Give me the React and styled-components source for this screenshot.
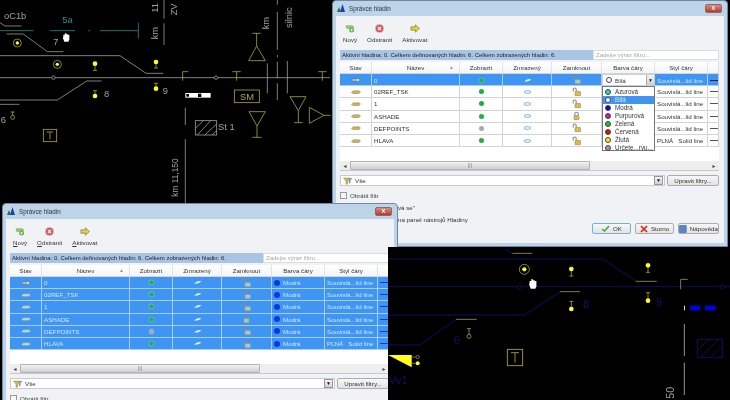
import React from "react";
import styled, { createGlobalStyle } from "styled-components";

const GlobalStyle = createGlobalStyle`
  * {
    margin: 0;
    padding: 0;
    box-sizing: border-box;
  }
  html, body {
    width: 730px;
    height: 400px;
    overflow: hidden;
    background: #000;
    font-family: "Liberation Sans", Arial, sans-serif;
  }
`;

const COLUMNS = "32px 88px 43px 49px 50px 53px 53px 11px";
const SELECTED = "#3f96f2";

const Desktop = styled.div`
  position: relative;
  width: 730px;
  height: 400px;
  overflow: hidden;
  background: #000;
  filter: blur(0.35px);
`;
const CadView = styled.svg`
  position: absolute;
  left: ${(p) => p.$x}px;
  top: ${(p) => p.$y}px;
  width: ${(p) => p.$w}px;
  height: ${(p) => p.$h}px;
  background: #000;
  display: block;
`;
const Window = styled.section`
  position: absolute;
  left: ${(p) => p.$x}px;
  top: ${(p) => p.$y}px;
  width: 396px;
  height: 247px;
  display: flex;
  flex-direction: column;
  background: #bdd3e8;
  border: 1px solid #6b8aa6;
  border-radius: 4px 4px 0 0;
  padding: 0 3px 3px;
  color: #222;
  font-size: 6.2px;
`;
const TitleBar = styled.header`
  height: 15px;
  flex: none;
  display: flex;
  align-items: center;
  gap: 3px;
  padding-left: 1px;
  font-size: 6.3px;
  color: #2b3440;
`;
const CloseButton = styled.div`
  margin-left: auto;
  margin-right: 2px;
  width: 17px;
  height: 9px;
  border-radius: 2px;
  background: linear-gradient(#dc8a80, #b8362a);
  border: 1px solid #8d6a68;
  color: #fff;
  font-size: 7px;
  line-height: 6px;
  text-align: center;
  font-weight: bold;
`;
const Body = styled.div`
  flex: 1;
  display: flex;
  flex-direction: column;
  background: #f0f2f5;
  padding: 0 5px 0 4px;
  min-height: 0;
`;
const Toolbar = styled.div`
  height: 34px;
  flex: none;
  display: flex;
  align-items: flex-start;
  padding: 8px 0 0 3px;
  gap: 10px;
`;
const ToolButton = styled.div`
  display: flex;
  flex-direction: column;
  align-items: center;
  gap: 3px;
  font-size: 6.2px;
  color: #333;
  u {
    text-decoration: ${(p) => (p.$mnemonic ? "underline" : "none")};
  }
`;
const InfoRow = styled.div`
  display: flex;
  height: 10px;
  flex: none;
`;
const InfoText = styled.div`
  width: 253px;
  background: #a9c5e6;
  padding-left: 2px;
  line-height: 10px;
  font-size: 5.95px;
  color: #222;
  white-space: nowrap;
`;
const SearchBox = styled.div`
  flex: 1;
  background: #fff;
  border: 1px solid #d8dde3;
  color: #a8a8a8;
  font-size: 6px;
  line-height: 8px;
  padding-left: 2px;
  white-space: nowrap;
  overflow: hidden;
`;
const TablePanel = styled.div`
  position: relative;
  margin-top: 2px;
  height: 109px;
  flex: none;
  background: #fff;
  border: 1px solid #c4c9cf;
  border-width: 0 0 1px 0;
  display: flex;
  flex-direction: column;
`;
const HeaderRow = styled.div`
  display: grid;
  grid-template-columns: ${COLUMNS};
  height: 12px;
  flex: none;
  background: linear-gradient(#fff, #f3f4f6);
  border-bottom: 1px solid #d5d5d5;
`;
const HeaderCell = styled.div`
  position: relative;
  text-align: center;
  line-height: 11px;
  font-size: 6.2px;
  color: #333;
  border-right: 1px solid #e2e3e6;
`;
const SortMark = styled.span`
  position: absolute;
  right: 5px;
  top: 0;
  font-size: 5px;
  color: #999;
`;
const Row = styled.div`
  display: grid;
  grid-template-columns: ${COLUMNS};
  height: 12.2px;
  flex: none;
  background: ${(p) => (p.$selected ? SELECTED : "#fff")};
  color: ${(p) => (p.$selected ? "#cfe4fb" : "#333")};
  border-bottom: 1px solid ${(p) => (p.$selected ? "#a8cdf5" : "#d4d4d4")};
`;
const Cell = styled.div`
  display: flex;
  align-items: center;
  justify-content: ${(p) => (p.$center ? "center" : "flex-start")};
  padding-left: ${(p) => (p.$center ? 0 : 2)}px;
  gap: 3px;
  font-size: 6.2px;
  white-space: pre;
  overflow: hidden;
  border-right: 1px solid ${(p) => (p.$selected ? "#a8cdf5" : "#d4d4d4")};
`;
const Dash = styled.span`
  display: block;
  width: 100%;
  height: 1px;
  background: ${(p) => p.$color};
`;
const ColorDot = styled.span`
  width: ${(p) => p.$size || 6}px;
  height: ${(p) => p.$size || 6}px;
  flex: none;
  border-radius: 50%;
  background: ${(p) => p.$color};
  border: ${(p) => (p.$ring ? "1px solid #444" : "none")};
`;
const ComboCell = styled.div`
  background: #fff;
  display: flex;
  align-items: center;
  gap: 3px;
  padding-left: 3px;
  color: #333;
  font-size: 6.2px;
  border: 1px solid #c8d0d8;
`;
const ComboArrow = styled.span`
  margin-left: auto;
  width: 8px;
  height: 100%;
  background: linear-gradient(#f4f4f4, #cfcfcf);
  border-left: 1px solid #aaa;
  color: #222;
  font-size: 5px;
  line-height: 10px;
  text-align: center;
`;
const Dropdown = styled.ul`
  position: absolute;
  left: 262px;
  top: 24px;
  width: 53px;
  height: 65px;
  background: #fff;
  border: 1px solid #777;
  list-style: none;
  padding-top: 0.5px;
  font-size: 6.3px;
  z-index: 2;
`;
const DropItem = styled.li`
  display: flex;
  align-items: center;
  gap: 4px;
  height: 8px;
  padding-left: 2px;
  white-space: nowrap;
  overflow: hidden;
  background: ${(p) => (p.$active ? SELECTED : "transparent")};
  color: ${(p) => (p.$active ? "#d8e9fc" : "#333")};
`;
const ScrollBar = styled.div`
  margin-top: auto;
  height: 9px;
  flex: none;
  display: flex;
  align-items: center;
  background: #eeeeee;
  color: #444;
  font-size: 5px;
`;
const ScrollEnd = styled.span`
  width: 10px;
  text-align: center;
  flex: none;
`;
const ScrollTrack = styled.div`
  flex: 1;
  height: 100%;
  display: flex;
`;
const ScrollThumb = styled.div`
  width: 240px;
  height: 100%;
  background: linear-gradient(#f3f3f3, #cfcfcf);
  border: 1px solid #b4b4b4;
  border-radius: 1px;
  text-align: center;
  line-height: 6px;
  color: #777;
`;
const FilterRow = styled.div`
  display: flex;
  align-items: center;
  margin-top: 4px;
  height: 11px;
  flex: none;
  gap: 2px;
`;
const FilterInput = styled.div`
  flex: 1;
  height: 100%;
  display: flex;
  align-items: center;
  gap: 2px;
  padding-left: 2px;
  background: #fff;
  border: 1px solid #c8ccd2;
  font-size: 6.2px;
  color: #333;
  position: relative;
`;
const FilterArrow = styled.span`
  position: absolute;
  right: 1px;
  top: 0;
  bottom: 0;
  width: 9px;
  background: linear-gradient(#f5f5f5, #d0d0d0);
  border: 1px solid #999;
  font-size: 5px;
  line-height: 7px;
  text-align: center;
  color: #111;
`;
const PushButton = styled.div`
  width: ${(p) => p.$w}px;
  height: ${(p) => p.$h || 11}px;
  flex: none;
  display: flex;
  align-items: center;
  justify-content: center;
  gap: 3px;
  background: linear-gradient(#f7f7f7, #e3e3e3);
  border: 1px solid ${(p) => (p.$primary ? "#6fb3d8" : "#adadad")};
  border-radius: 2px;
  font-size: 6.2px;
  color: #333;
  white-space: nowrap;
`;
const CheckRow = styled.label`
  display: flex;
  align-items: center;
  gap: 3px;
  margin-top: 4px;
  height: 10px;
  flex: none;
  font-size: 6.2px;
  color: #444;
`;
const CheckBox = styled.span`
  width: 7px;
  height: 7px;
  background: #f7f7f7;
  border: 1px solid #999;
`;
const Note = styled.div`
  height: 12px;
  line-height: 12px;
  flex: none;
  font-size: 6.2px;
  color: #333;
  white-space: nowrap;
`;
const Notes = styled.div`
  margin-top: 2px;
  padding-left: 58px;
`;
const Footer = styled.div`
  display: flex;
  justify-content: flex-end;
  gap: 4px;
  margin-top: -3px;
`;

const AppLogo = () => (
  <svg width="9" height="9" viewBox="0 0 9 9">
    <path d="M0 8 L2 3 L4 8Z" fill="#1e7a3a" />
    <path d="M3 8 L5.5 0 L8 8Z" fill="#1d3fa8" />
  </svg>
);
const NewIcon = () => (
  <svg width="10" height="9" viewBox="0 0 12 11">
    <path d="M1 2 H9 L11 4 L8 5.5 H2Z" fill="#9cc36a" stroke="#6d9a42" strokeWidth=".5" />
    <circle cx="8" cy="7.5" r="3" fill="#55b04a" />
    <path d="M6.5 7.5 H9.5 M8 6 V9" stroke="#fff" strokeWidth="1" />
  </svg>
);
const DeleteIcon = () => (
  <svg width="9" height="9" viewBox="0 0 11 11">
    <circle cx="5.5" cy="5.5" r="5" fill="#d9575a" stroke="#c9c4c4" />
    <path d="M3.5 3.5 L7.5 7.5 M7.5 3.5 L3.5 7.5" stroke="#fff" strokeWidth="1.4" />
  </svg>
);
const ActivateIcon = () => (
  <svg width="10" height="9" viewBox="0 0 12 11">
    <path d="M1 3.5 H6.5 V1 L11.5 5.5 L6.5 10 V7.5 H1Z" fill="#e4d23e" stroke="#6a6426" strokeWidth=".7" />
  </svg>
);
const LayerIcon = ({ active, selected }) => (
  <svg width="10" height="6" viewBox="0 0 10 6">
    {active ? (
      <path d="M1 2 H6 V.5 L9.5 3 L6 5.5 V4 H1Z" fill={selected ? "#c9d6c0" : "#e4d23e"} stroke="#56646e" strokeWidth=".5" />
    ) : (
      <path d="M.5 3.5 L2.5 1.8 H8 L9.5 2.8 L8 4.5 H2Z" fill={selected ? "#c9d6c0" : "#c9b75c"} stroke={selected ? "#7c94ad" : "#7a6c2a"} strokeWidth=".4" />
    )}
  </svg>
);
const Bulb = ({ off, selected }) => (
  <svg width="7" height="7" viewBox="0 0 7 7">
    <circle cx="3.5" cy="3.5" r="2.5" fill={off ? "#a9a9a9" : "#1fae45"} stroke={selected ? "#8fc2e0" : "none"} strokeWidth=".6" />
  </svg>
);
const Freeze = ({ selected }) =>
  selected ? (
    <svg width="9" height="5" viewBox="0 0 10 5">
      <path d="M1 3.5 Q5 .5 9 1 Q7 4 1 3.5Z" fill="#e6f1fc" />
    </svg>
  ) : (
    <svg width="9" height="6" viewBox="0 0 10 6">
      <ellipse cx="5" cy="3" rx="3.8" ry="1.6" fill="#e6f2fb" stroke="#6fa7d2" strokeWidth=".8" />
    </svg>
  );
const Lock = ({ closed, selected }) => (
  <svg width="9" height="10" viewBox="0 0 9 9">
    {closed ? (
      <path d="M2.8 4 V2.5 a1.7 1.7 0 0 1 3.4 0 V4" fill="none" stroke="#8a8a8a" strokeWidth="1.1" />
    ) : (
      <path d="M1.2 4 V2 a1.5 1.5 0 0 1 3 0 V4" fill="none" stroke="#8a8a8a" strokeWidth="1.1" />
    )}
    <rect x={closed ? 2 : 3} y="4" width={closed ? 5 : 5.5} height="4.2" rx=".5" fill={selected ? "#b8c4b0" : "#d9b95a"} stroke={selected ? "#7f98b2" : "#94782e"} strokeWidth=".5" />
  </svg>
);
const Funnel = () => (
  <svg width="10" height="8" viewBox="0 0 10 8">
    <path d="M.5 1 H7 L4.5 4 V7 L3 7.5 V4Z" fill="#d8b83c" stroke="#8a7428" strokeWidth=".4" />
    <path d="M5 1 H9.5 L7.5 3.5 V6 L6 6.5Z" fill="#8a9ab8" />
  </svg>
);

const Cursor = ({ x, y, s = 3 }) => (
  <path
    transform={`translate(${x} ${y}) scale(${s})`}
    d="M-3 -1 L-3 -3 L-1.5 -3 L-1.5 -4.5 L0 -4.5 L0 -3.5 L1.5 -3.5 L1.5 -3 L3 -3 L3 2 L2 4 L-2 4 L-3.5 0Z"
    fill="#fff"
  />
);
const Signal = ({ x, y, tip, dot = "#ffff1e", hollow, tan = "#a8a83a" }) => (
  <g>
    <path d={`M${x} ${y} V${tip} M${x - 6} ${tip} H${x + 6}`} stroke={tan} strokeWidth="2.4" fill="none" />
    <circle cx={x} cy={y} r={hollow ? 6 : 7} fill={hollow ? "#000" : dot} stroke={hollow ? tan : "none"} strokeWidth="2.4" />
  </g>
);
const Target = ({ x, y, r }) => (
  <g>
    <circle cx={x} cy={y} r={r} fill="none" stroke="#a8a83a" strokeWidth="2.4" />
    <circle cx={x} cy={y} r={r * 0.42} fill="#ffff1e" />
  </g>
);

const TopCad = () => {
  const gray = "#a0a0a0";
  const tan = "#a8a83a";
  return (
    <CadView $x={0} $y={0} $w={335} $h={205} viewBox="0 0 1005 615">
      <g fill="none" strokeWidth="2.4">
        <path d="M0 233 H990" stroke={gray} />
        <path d="M0 167 H360 L438 220 H490" stroke={gray} />
        <path d="M0 300 H172 L260 243 H305" stroke={gray} />
        <path d="M20 102 H70 L142 155 H190" stroke="#a09f70" />
        <path d="M0 68 L15 78 H65" stroke="#a09f70" />
        <path d="M0 313 H58" stroke="#a09f70" />
        <path d="M0 92 H100 M150 92 H225 M265 92 H270 M300 92 H415 M415 68 V115" stroke="#2c8c8c" />
        <path d="M492 0 V56 M492 70 V135 M832 0 V14 M832 36 V150 M832 165 V172 M832 185 V235 M832 250 V300" stroke={gray} />
        <path d="M802 190 V280 M862 183 V280 M556 323 V375 M556 418 V610" stroke={gray} />
        <circle cx="160" cy="233" r="5" fill="#000" stroke="#8f9fb0" />
        <circle cx="648" cy="233" r="5" fill="#000" stroke="#8f9fb0" />
        <path d="M548 242 V215 H565 M697 215 H722 M710 215 V242 M955 215 H980 M967 215 V242" stroke={tan} />
        <rect x="130" y="388" width="40" height="37" stroke={tan} />
        <path d="M140 396 H160 M150 396 V418" stroke={tan} />
        <rect x="703" y="270" width="75" height="38" stroke={tan} />
        <path d="M757 100 H782 M770 100 V138 M770 138 L746 182 H796Z" stroke={tan} />
        <path d="M747 335 H796 L771 378Z M771 378 V412 M757 412 H785" stroke={tan} />
        <path d="M870 290 H918 L895 332Z M895 332 V368 M882 368 H908" stroke={tan} />
        <path d="M928 322 V370 L972 346Z M972 346 H992" stroke={tan} />
        <rect x="586" y="362" width="64" height="43" stroke={gray} />
        <path d="M586 385 L610 362 M592 405 L632 362 M614 405 L650 372 M636 405 L650 392" stroke={gray} />
      </g>
      <rect x="556" y="279" width="76" height="14" fill="#fff" />
      <rect x="559" y="282" width="8" height="8" fill="#000" />
      <rect x="594" y="281" width="10" height="10" fill="#000" />
      <Target x={52} y={129} r={12} />
      <Target x={172} y={193} r={12} />
      <Signal x={285} y={191} tip={211} />
      <Signal x={468} y={186} tip={204} />
      <Signal x={468} y={266} tip={250} />
      <Signal x={285} y={288} tip={272} />
      <Signal x={38} y={352} tip={336} hollow />
      <Cursor x={199} y={113} />
      <g fontFamily="Liberation Sans, sans-serif" fontSize="28" fill="#a0a0a0">
        <text x="12" y="57">oC1b</text>
        <text x="187" y="68" fill="#2c8c8c">5a</text>
        <text x="160" y="136">7</text>
        <text x="2" y="368">6</text>
        <text x="312" y="290">8</text>
        <text x="488" y="282">9</text>
        <text x="654" y="390">St 1</text>
        <text x="720" y="300" fill={tan}>SM</text>
        <text x="475" y="118" transform="rotate(-90 475 118)">km</text>
        <text x="475" y="38" transform="rotate(-90 475 38)">11</text>
        <text x="532" y="46" transform="rotate(-90 532 46)">ZV</text>
        <text x="807" y="88" transform="rotate(-90 807 88)">km</text>
        <text x="875" y="84" transform="rotate(-90 875 84)">silnic</text>
        <text x="534" y="590" fontSize="25" transform="rotate(-90 534 590)">km 11,150</text>
      </g>
    </CadView>
  );
};

const BottomCad = () => {
  const navy = "#10106e";
  const tan = "#a8a83a";
  return (
    <CadView $x={388} $y={247} $w={342} $h={153} viewBox="9 21 1026 459">
      <g fill="none" strokeWidth="2.6">
        <path d="M9 57 H655 L755 124" stroke={navy} />
        <path d="M9 140 H1035" stroke={navy} />
        <path d="M9 225 H418 L525 155" stroke={navy} />
        <path d="M9 315 H105 L213 238" stroke={navy} />
        <path d="M360 28 L382 40" stroke={navy} />
        <path d="M382 40 H442 M525 155 H585 M213 238 H275 M752 124 H815" stroke="#8f8f5a" />
        <circle cx="403" cy="140" r="6" fill="#000" stroke={navy} />
        <circle cx="1012" cy="140" r="6" fill="#000" stroke={navy} />
        <path d="M887 148 V118 H908" stroke="#8f8f5a" />
        <path d="M898 252 V348 M898 368 V465" stroke="#a9a9a9" />
        <rect x="367" y="328" width="46" height="49" stroke={tan} />
        <path d="M378 338 H402 M390 338 V368" stroke={tan} />
        <rect x="938" y="298" width="74" height="55" stroke={navy} />
        <path d="M938 330 L972 298 M948 353 L1000 298 M976 353 L1012 318" stroke={navy} />
      </g>
      <path d="M9 345 H80 V382Z" fill="#ffff1e" />
      <circle cx="98" cy="351" r="5" fill="#000" stroke={tan} strokeWidth="2" />
      <circle cx="98" cy="370" r="6" fill="#ffff1e" />
      <path d="M80 351 H92 M80 370 H92" stroke={tan} strokeWidth="2" />
      <rect x="897" y="197" width="3" height="14" fill="#ddd" />
      <rect x="915" y="197" width="31" height="14" fill="#0000e6" />
      <rect x="960" y="197" width="32" height="14" fill="#0000e6" />
      <Target x={418} y={88} r={15} />
      <Signal x={559} y={87} tip={108} />
      <Signal x={789} y={76} tip={97} />
      <Signal x={559} y={207} tip={184} />
      <Signal x={789} y={182} tip={158} />
      <Signal x={252} y={289} tip={266} hollow />
      <Cursor x={444} y={133} s={3.4} />
      <g fontFamily="Liberation Sans, sans-serif" fontSize="32" fill={navy}>
        <text x="594" y="205">8</text>
        <text x="813" y="197">9</text>
        <text x="207" y="311">6</text>
        <text x="12" y="431">Vv1</text>
        <text x="866" y="476" fill="#a0a0a0" transform="rotate(-90 866 476)">50</text>
      </g>
    </CadView>
  );
};

const LAYERS = [
  { name: "0", active: true },
  { name: "02REF_TSK" },
  { name: "1" },
  { name: "ASHADE", closed: true },
  { name: "DEFPOINTS", off: true },
  { name: "HLAVA", solid: true },
];
const HEADERS = ["Stav", "Název", "Zobrazit", "Zmrazený", "Zamknout", "Barva čáry", "Styl čáry", ""];
const COLORS = [
  ["Azurová", "#22d6d6"],
  ["Bílá", "#fff"],
  ["Modrá", "#0a0ad0"],
  ["Purpurová", "#d010d0"],
  ["Zelená", "#18c828"],
  ["Červená", "#d81010"],
  ["Žlutá", "#f0f010"],
  ["Určete...rvu...", "#c88a8a"],
];

function LayerRow({ layer, index, allSelected, picking }) {
  const selected = allSelected || (picking && index === 0);
  return (
    <Row $selected={selected}>
      <Cell $center $selected={selected}>
        <LayerIcon active={layer.active} selected={selected} />
      </Cell>
      <Cell $selected={selected}>{layer.name}</Cell>
      <Cell $center $selected={selected}>
        <Bulb off={layer.off} selected={selected} />
      </Cell>
      <Cell $center $selected={selected}>
        <Freeze selected={selected} />
      </Cell>
      <Cell $center $selected={selected}>
        <Lock closed={layer.closed} selected={selected} />
      </Cell>
      {picking && index === 0 ? (
        <ComboCell>
          <ColorDot $size={6} $color="#fff" $ring />
          Bílá
          <ComboArrow>▼</ComboArrow>
        </ComboCell>
      ) : (
        <Cell $selected={selected}>
          {allSelected && <ColorDot $color="#1437dc" />}
          {allSelected ? "Modrá" : ""}
        </Cell>
      )}
      <Cell $selected={selected}>{layer.solid ? "PLNÁ   Solid line" : "Souvislá...lid line"}</Cell>
      <Cell $selected={selected}>
        <Dash $color={allSelected ? "#1437dc" : selected ? "#123" : "#555"} />
      </Cell>
    </Row>
  );
}

function LayerDialog({ x, y, allSelected, picking }) {
  return (
    <Window $x={x} $y={y}>
      <TitleBar>
        <AppLogo />
        Správce hladin
        <CloseButton>x</CloseButton>
      </TitleBar>
      <Body>
        <Toolbar>
          <ToolButton $mnemonic={allSelected}>
            <NewIcon />
            <span><u>N</u>ový</span>
          </ToolButton>
          <ToolButton $mnemonic={allSelected}>
            <DeleteIcon />
            <span><u>O</u>dstranit</span>
          </ToolButton>
          <ToolButton $mnemonic={allSelected}>
            <ActivateIcon />
            <span><u>A</u>ktivovat</span>
          </ToolButton>
        </Toolbar>
        <InfoRow>
          <InfoText>Aktivní hladina: 0. Celkem definovaných hladin: 6. Celkem zobrazených hladin: 6.</InfoText>
          <SearchBox>Zadejte výraz filtru...</SearchBox>
        </InfoRow>
        <TablePanel>
          <HeaderRow>
            {HEADERS.map((h, i) => (
              <HeaderCell key={i}>
                {h}
                {i === 1 && <SortMark>▲</SortMark>}
              </HeaderCell>
            ))}
          </HeaderRow>
          {LAYERS.map((layer, i) => (
            <LayerRow key={layer.name} layer={layer} index={i} allSelected={allSelected} picking={picking} />
          ))}
          {picking && (
            <Dropdown>
              {COLORS.map(([name, color]) => (
                <DropItem key={name} $active={name === "Bílá"}>
                  <ColorDot $size={6} $color={color} $ring />
                  {name}
                </DropItem>
              ))}
            </Dropdown>
          )}
          <ScrollBar>
            <ScrollEnd>◄</ScrollEnd>
            <ScrollTrack>
              <ScrollThumb>|||</ScrollThumb>
            </ScrollTrack>
            <ScrollEnd>►</ScrollEnd>
          </ScrollBar>
        </TablePanel>
        <FilterRow>
          <FilterInput>
            <Funnel />
            Vše
            <FilterArrow>▼</FilterArrow>
          </FilterInput>
          <PushButton $w={52}>Upravit filtry...</PushButton>
        </FilterRow>
        <CheckRow>
          <CheckBox />
          Obrátit filtr
        </CheckRow>
        {picking && (
          <Notes>
            <Note>vá se"</Note>
            <Note>na panel nástrojů Hladiny</Note>
          </Notes>
        )}
        {picking && (
          <Footer>
            <PushButton $w={39} $primary>
              <svg width="9" height="7" viewBox="0 0 9 7">
                <path d="M1 4 L3.5 6 L8 1" fill="none" stroke="#4aa83a" strokeWidth="1.6" />
              </svg>
              OK
            </PushButton>
            <PushButton $w={39}>
              <svg width="8" height="8" viewBox="0 0 8 8">
                <path d="M1 1 L7 7 M7 1 L1 7" stroke="#d8281c" strokeWidth="1.7" />
              </svg>
              Storno
            </PushButton>
            <PushButton $w={41}>
              <svg width="8" height="8" viewBox="0 0 8 8">
                <rect width="8" height="8" rx="1" fill="#5a86c8" />
              </svg>
              Nápověda
            </PushButton>
          </Footer>
        )}
      </Body>
    </Window>
  );
}

export default function App() {
  return (
    <Desktop>
      <GlobalStyle />
      <TopCad />
      <LayerDialog x={332} y={0} picking />
      <LayerDialog x={2} y={203} allSelected />
      <BottomCad />
    </Desktop>
  );
}
